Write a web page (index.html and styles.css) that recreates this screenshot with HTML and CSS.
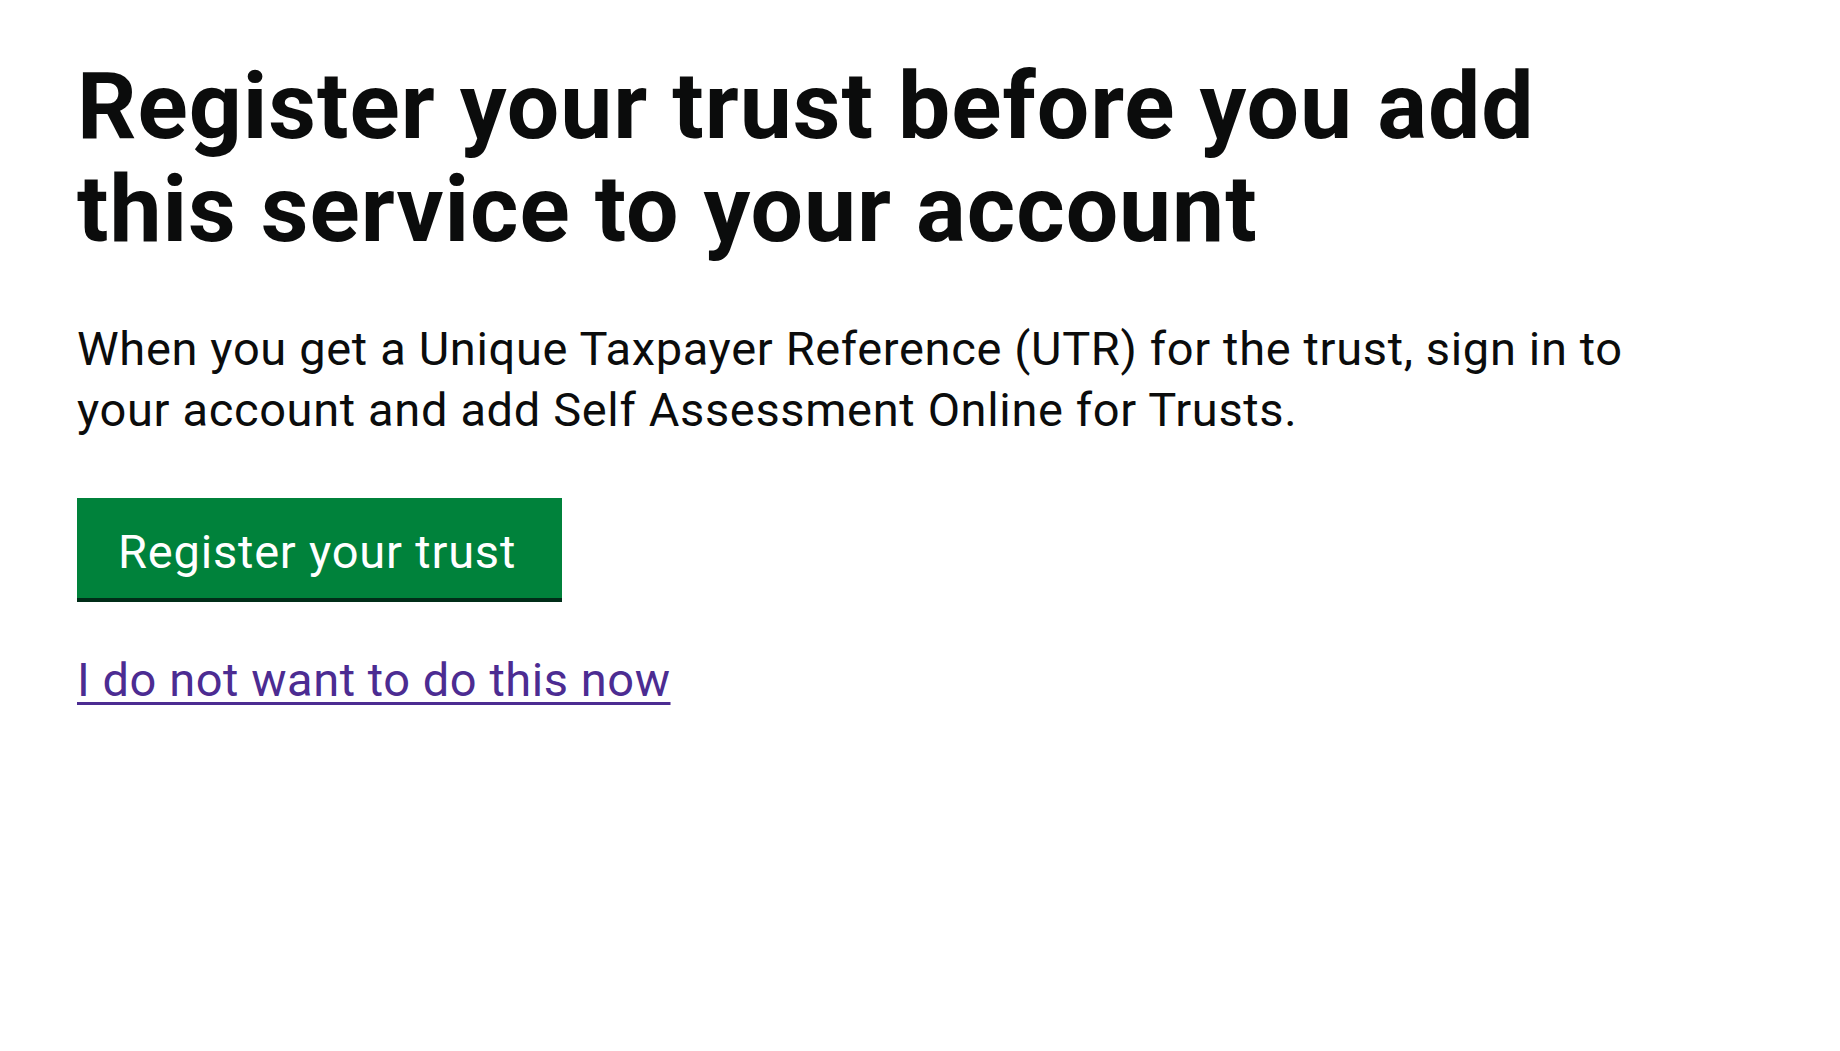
FILE: index.html
```html
<!DOCTYPE html>
<html lang="en">
<head>
<meta charset="utf-8">
<title>Register your trust before you add this service to your account</title>
<link rel="stylesheet" href="styles.css">
</head>
<body>
<main class="page">
  <h1 class="heading">Register your trust before you add this service to your account</h1>
  <p class="body-text">When you get a Unique Taxpayer Reference (UTR) for the trust, sign in to your account and add Self Assessment Online for Trusts.</p>
  <div class="actions">
    <a class="button" href="#">Register your trust</a>
    <a class="link" href="#">I do not want to do this now</a>
  </div>
</main>
</body>
</html>
```
FILE: styles.css
```css
html, body {
  margin: 0;
  padding: 0;
  background: #ffffff;
}

body {
  font-family: Roboto, "Liberation Sans", Arial, sans-serif;
  color: #0b0c0c;
}

.page {
  padding: 55px 0 0 77px;
}

.heading {
  margin: 0;
  max-width: 1520px;
  font-size: 93px;
  line-height: 103px;
  font-weight: 700;
  letter-spacing: 0.95px;
}

.body-text {
  margin: 57px 0 0 0;
  max-width: 1620px;
  font-size: 47px;
  line-height: 61px;
  font-weight: 400;
  letter-spacing: 0.65px;
}

.actions {
  display: flex;
  flex-direction: column;
  align-items: flex-start;
  margin-top: 58px;
}

.button {
  display: inline-block;
  padding: 23px 46px 16px 41px;
  font-size: 47px;
  line-height: 61px;
  letter-spacing: 0.8px;
  color: #ffffff;
  background: #00823b;
  box-shadow: 0 4px 0 #002d18;
  text-decoration: none;
}

.link {
  margin-top: 51px;
  font-size: 47px;
  line-height: 61px;
  letter-spacing: 0.55px;
  color: #4c2c92;
  text-decoration: underline;
  text-decoration-thickness: 3px;
  text-underline-offset: 6px;
}
```
